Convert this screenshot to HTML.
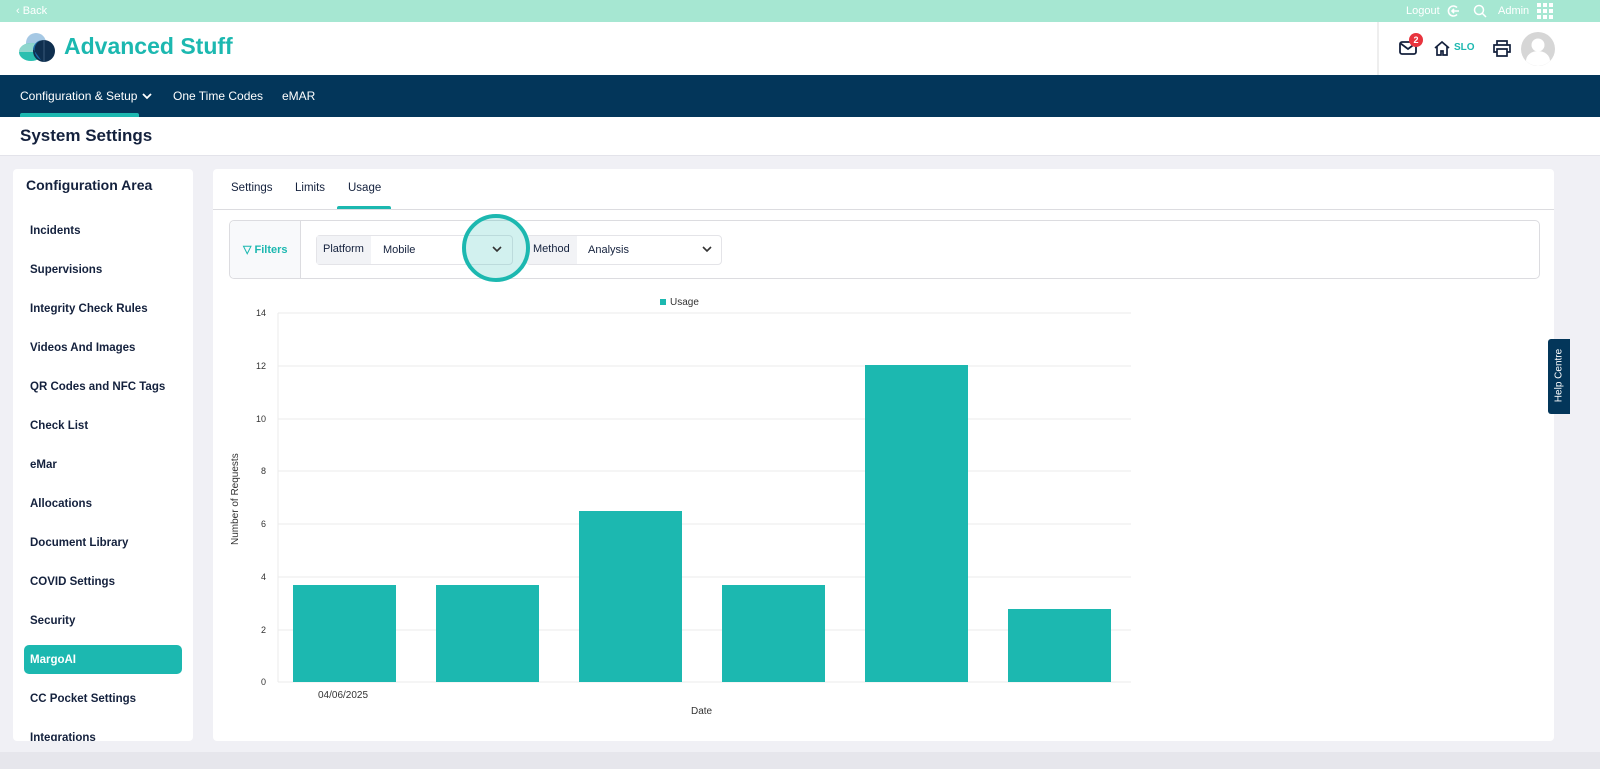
<!DOCTYPE html>
<html><head><style>
*{box-sizing:border-box;margin:0;padding:0}
body{width:1600px;height:769px;overflow:hidden;background:#f0f0f5;font-family:"Liberation Sans",sans-serif;color:#14213d;position:relative}
.abs{position:absolute}
.top{left:0;top:0;width:1600px;height:22px;background:#a6e7d2;color:#fff;font-size:11px}
.hdr{left:0;top:22px;width:1600px;height:53px;background:#fff}
.nav{left:0;top:75px;width:1600px;height:42px;background:#03365a;color:#fff;font-size:12px}
.title{left:0;top:117px;width:1600px;height:39px;background:#fff;border-bottom:1px solid #e3e3ea}
.side{left:13px;top:169px;width:180px;height:572px;background:#fff;border-radius:4px;overflow:hidden}
.side .it{position:absolute;left:17px;font-size:11.5px;font-weight:bold;color:#14213d}
.main{left:213px;top:169px;width:1341px;height:572px;background:#fff;border-radius:4px}
.txt{font-size:10px;color:#333}
</style></head><body>
<div class="abs top"><span class="abs" style="left:16px;top:5px">‹ Back</span>
<span class="abs" style="left:1406px;top:5px">Logout</span>
<svg class="abs" style="left:1447px;top:4px" width="14" height="14" viewBox="0 0 14 14" fill="none" stroke="#fff" stroke-width="1.6"><path d="M10 3.5A5 5 0 1 0 10 10.5M5 7h7M7 5l-2 2 2 2"/></svg>
<svg class="abs" style="left:1473px;top:4px" width="14" height="14" viewBox="0 0 14 14" fill="none" stroke="#fff" stroke-width="1.5"><circle cx="6" cy="6" r="4.5"/><path d="M9.5 9.5l3.5 3.5"/></svg>
<span class="abs" style="left:1498px;top:5px">Admin</span>
<svg class="abs" style="left:1537px;top:3px" width="16" height="16" viewBox="0 0 16 16" fill="#fff"><rect x="0" y="0" width="4" height="4"/><rect x="6" y="0" width="4" height="4"/><rect x="12" y="0" width="4" height="4"/><rect x="0" y="6" width="4" height="4"/><rect x="6" y="6" width="4" height="4"/><rect x="12" y="6" width="4" height="4"/><rect x="0" y="12" width="4" height="4"/><rect x="6" y="12" width="4" height="4"/><rect x="12" y="12" width="4" height="4"/></svg>
</div>
<div class="abs hdr">
<svg class="abs" style="left:19px;top:10px" width="40" height="32" viewBox="0 0 40 32"><circle cx="17" cy="11" r="10" fill="#a5c8e4"/><ellipse cx="12" cy="20" rx="12" ry="9" fill="#2bbfb0"/><path d="M0 20a12 9 0 0 1 24 0z" fill="#8fd6cd"/><circle cx="25" cy="19" r="11" fill="#0f2f4f"/><path d="M14 17a11 11 0 0 1 8-9 11 11 0 0 0 0 20z" fill="#1c6aa8"/><path d="M25 8v22" stroke="#3a5a7a" stroke-width="1"/></svg>
<div class="abs" style="left:64px;top:11px;font-size:23px;font-weight:bold;color:#1cb8b0">Advanced Stuff</div>
<div class="abs" style="left:1377px;top:0;width:2px;height:53px;background:#eee"></div>
<svg class="abs" style="left:1399px;top:19px" width="18" height="14" viewBox="0 0 18 14" fill="none" stroke="#14213d" stroke-width="1.8"><rect x="1" y="1" width="16" height="12" rx="2"/><path d="M1 2l8 6 8-6"/></svg>
<div class="abs" style="left:1409px;top:11px;width:14px;height:14px;border-radius:7px;background:#e8343e;color:#fff;font-size:9px;text-align:center;line-height:14px;font-weight:bold">2</div>
<svg class="abs" style="left:1434px;top:18px" width="16" height="16" viewBox="0 0 16 16" fill="none" stroke="#14213d" stroke-width="1.7"><path d="M1 8l7-6 7 6M3 6.5V15h4v-4h2v4h4V6.5"/></svg>
<span class="abs" style="left:1454px;top:20px;font-size:10px;color:#1cb8b0;font-weight:bold">SLO</span>
<svg class="abs" style="left:1493px;top:18px" width="18" height="17" viewBox="0 0 18 17" fill="none" stroke="#14213d" stroke-width="1.7"><path d="M4 5V1h10v4M4 12H1V5h16v7h-3M4 9h10v7H4z"/></svg>
<svg class="abs" style="left:1521px;top:10px" width="34" height="34" viewBox="0 0 34 34"><circle cx="17" cy="17" r="17" fill="#d6d6d6"/><circle cx="17" cy="13" r="6.5" fill="#fff"/><path d="M5 29a12 10 0 0 1 24 0a17 17 0 0 1-24 0z" fill="#fff"/></svg>
</div>
<div class="abs nav"><span class="abs" style="left:20px;top:14px">Configuration &amp; Setup</span>
<svg class="abs" style="left:142px;top:18px" width="10" height="7" viewBox="0 0 10 7" fill="none" stroke="#fff" stroke-width="1.8"><path d="M1 1l4 4 4-4"/></svg>
<span class="abs" style="left:173px;top:14px">One Time Codes</span><span class="abs" style="left:282px;top:14px">eMAR</span>
<div class="abs" style="left:20px;top:38px;width:119px;height:4px;background:#1cb8b0;border-radius:2px 2px 0 0"></div></div>
<div class="abs title"><span class="abs" style="left:20px;top:9px;font-size:17px;font-weight:bold">System Settings</span></div>
<div class="abs" style="left:0;top:752px;width:1600px;height:17px;background:#e6e6ec"></div>
<div class="abs side">
<div class="abs" style="left:13px;top:8px;font-size:14px;font-weight:bold">Configuration Area</div>
<div class="abs" style="left:11px;top:476px;width:158px;height:29px;background:#1cb8b0;border-radius:5px"></div>
<div class="abs" style="left:180px;top:110px;width:4px;height:445px;background:#c8c8cc;border-radius:2px"></div>
<div class="it" style="top:56px">Incidents</div><div class="it" style="top:95px">Supervisions</div><div class="it" style="top:134px">Integrity Check Rules</div><div class="it" style="top:173px">Videos And Images</div><div class="it" style="top:212px">QR Codes and NFC Tags</div><div class="it" style="top:251px">Check List</div><div class="it" style="top:290px">eMar</div><div class="it" style="top:329px">Allocations</div><div class="it" style="top:368px">Document Library</div><div class="it" style="top:407px">COVID Settings</div><div class="it" style="top:446px">Security</div><div class="it" style="top:485px;color:#fff">MargoAI</div><div class="it" style="top:524px">CC Pocket Settings</div><div class="it" style="top:563px">Integrations</div>
</div>
<div class="abs main">
<span class="abs" style="left:18px;top:13px;font-size:11.5px">Settings</span><span class="abs" style="left:82px;top:13px;font-size:11.5px">Limits</span><span class="abs" style="left:135px;top:13px;font-size:11.5px">Usage</span>
<div class="abs" style="left:124px;top:37px;width:54px;height:4px;background:#1cb8b0;border-radius:2px 2px 0 0"></div>
<div class="abs" style="left:0;top:40px;width:1341px;height:1px;background:#dcdce0"></div>
<div class="abs" style="left:16px;top:51px;width:1311px;height:59px;border:1px solid #dcdce0;border-radius:5px;background:#fff"></div>
<div class="abs" style="left:17px;top:52px;width:71px;height:57px;background:#f8f9fb;border-right:1px solid #dcdce0;border-radius:5px 0 0 5px"></div>
<span class="abs" style="left:30px;top:74px;font-size:11px;color:#1cb8b0;font-weight:bold">▽ Filters</span>
<div class="abs" style="left:103px;top:66px;width:197px;height:30px;border:1px solid #e4e4e8;border-radius:4px;background:#fff"></div>
<div class="abs" style="left:104px;top:67px;width:54px;height:28px;background:#f2f3f6"></div>
<span class="abs" style="left:110px;top:74px;font-size:11px">Platform</span><span class="abs" style="left:170px;top:75px;font-size:11px">Mobile</span>
<div class="abs" style="left:313px;top:66px;width:196px;height:30px;border:1px solid #e4e4e8;border-radius:4px;background:#fff"></div>
<div class="abs" style="left:314px;top:67px;width:50px;height:28px;background:#f2f3f6"></div>
<span class="abs" style="left:320px;top:74px;font-size:11px">Method</span><span class="abs" style="left:375px;top:75px;font-size:11px">Analysis</span>
<svg class="abs" style="left:489px;top:77px" width="10" height="7" viewBox="0 0 10 7" fill="none" stroke="#333" stroke-width="1.6"><path d="M1 1l4 4 4-4"/></svg>
<div class="abs" style="left:249px;top:45px;width:68px;height:68px;border-radius:50%;border:4px solid #1cb8b0;background:rgba(28,184,176,0.2)"></div>
<svg class="abs" style="left:279px;top:77px" width="10" height="7" viewBox="0 0 10 7" fill="none" stroke="#333" stroke-width="1.6"><path d="M1 1l4 4 4-4"/></svg>
</div>
<svg class="abs" style="left:220px;top:290px" width="930" height="440">
<g stroke="#ebebeb" stroke-width="1"><path d="M58 23H911M58 76H911M58 129H911M58 181H911M58 234H911M58 287H911M58 340H911M58 392H911M58 23V392"/></g>
<g font-family="Liberation Sans" font-size="9" fill="#333" text-anchor="end"><text x="46" y="26">14</text><text x="46" y="79">12</text><text x="46" y="132">10</text><text x="46" y="184">8</text><text x="46" y="237">6</text><text x="46" y="290">4</text><text x="46" y="343">2</text><text x="46" y="395">0</text></g>
<g fill="#1cb8b0"><rect x="73" y="295" width="103" height="97"/><rect x="216" y="295" width="103" height="97"/><rect x="359" y="221" width="103" height="171"/><rect x="502" y="295" width="103" height="97"/><rect x="645" y="75" width="103" height="317"/><rect x="788" y="319" width="103" height="73"/><rect x="440" y="9" width="6" height="6"/></g>
<g font-family="Liberation Sans" font-size="10" fill="#333"><text x="450" y="15">Usage</text><text x="98" y="408">04/06/2025</text><text x="471" y="424">Date</text><text transform="translate(18,255) rotate(-90)">Number of Requests</text></g>
</svg>
<div class="abs" style="left:1548px;top:339px;width:22px;height:75px;background:#03365a;border-radius:3px 0 0 3px"></div>
<span class="abs" style="left:1527px;top:370px;width:64px;font-size:10px;color:#fff;transform:rotate(-90deg);text-align:center">Help Centre</span>
</body></html>
